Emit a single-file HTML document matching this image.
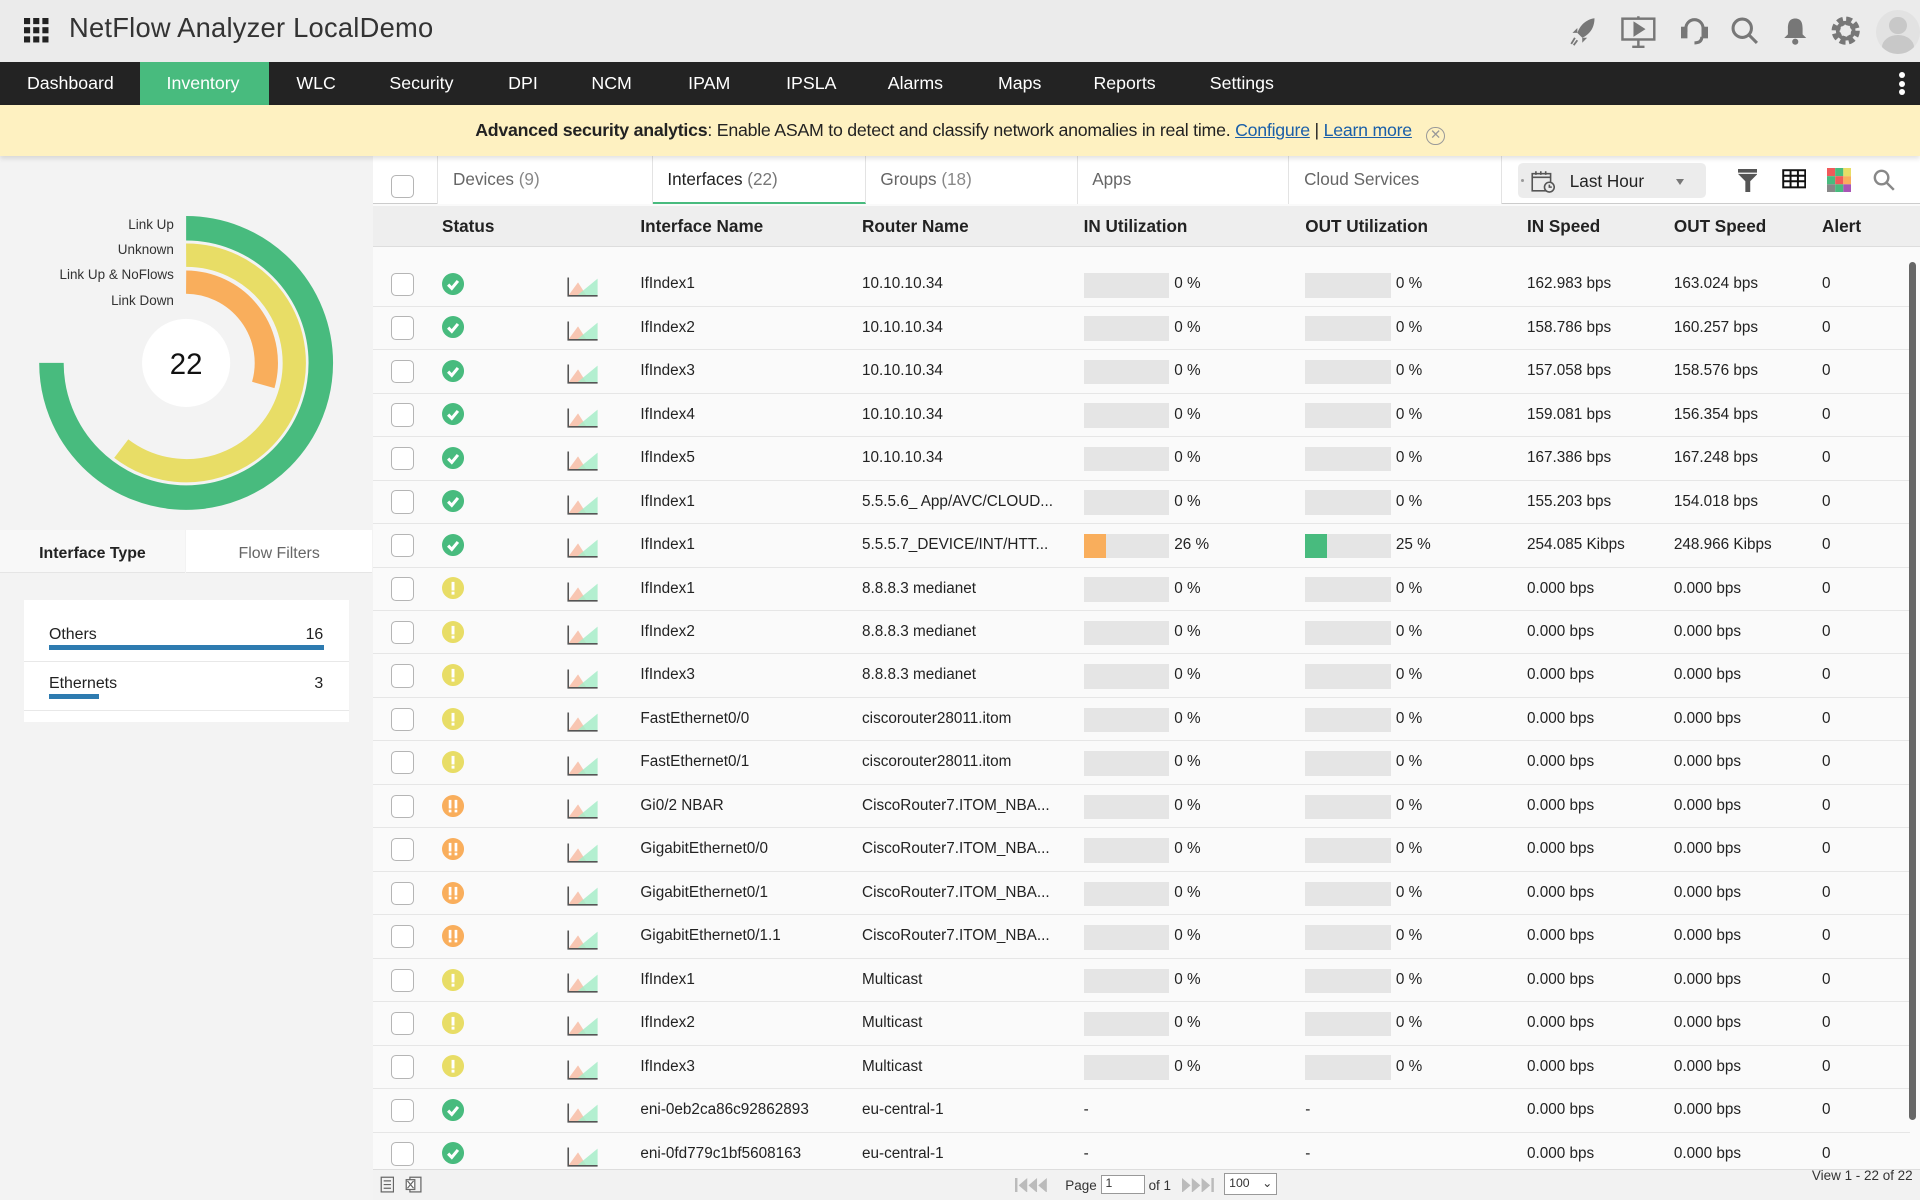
<!DOCTYPE html>
<html><head><meta charset="utf-8"><style>
*{box-sizing:border-box;margin:0;padding:0}
html,body{width:1920px;height:1200px;overflow:hidden;background:#fafafa}
#w{zoom:1.22449;width:1568px;height:980px;position:relative;font-family:"Liberation Sans",sans-serif;color:#222;overflow:hidden}
.a{position:absolute}
#top{left:0;top:0;width:1568px;height:51px;background:#ebebeb}
#nav{left:0;top:51px;width:1568px;height:35px;background:#232323}
#nav span{position:absolute;top:0;line-height:35px;color:#fff;font-size:14.5px}
#ban{left:0;top:86px;width:1568px;height:41px;background:#fef1c1;box-shadow:0 2px 4px rgba(0,0,0,.12);text-align:center;line-height:41px;font-size:14.5px;color:#222;z-index:2;letter-spacing:-.2px}
#ban a{color:#1a5fa8;text-decoration:underline}
#left{left:0;top:127px;width:305px;height:853px;background:#f3f3f3}
.lbl{position:absolute;right:163px;font-size:11px;color:#333}
#main{left:305px;top:127px;width:1263px;height:853px;background:#fafafa}
.tab{position:absolute;top:0;height:40px;line-height:38px;font-size:14px;color:#666;padding-left:12px;border-right:1px solid #e3e3e3;background:#fff}
.cb{position:absolute;width:19px;height:19px;border:1px solid #b5b5b5;border-radius:4px;background:#fff}
.hd{position:absolute;top:49px;font-size:14px;font-weight:bold;color:#222}
.row{position:absolute;left:0;width:1255px;height:35.5px;border-bottom:1px solid #e6e6e6;font-size:12.5px;color:#222}
.row span{position:absolute;top:0;line-height:35px;white-space:nowrap}
.ub{position:absolute;top:8px;width:70px;height:20px;background:#e5e5e5}
</style></head><body><div id="w">
<div id="top" class="a">
 <svg class="a" style="left:20px;top:15px" width="20" height="20" viewBox="0 0 20 20" fill="#222"><rect x="0" y="0" width="5" height="5"/><rect x="7.5" y="0" width="5" height="5"/><rect x="15" y="0" width="5" height="5"/><rect x="0" y="7.5" width="5" height="5"/><rect x="7.5" y="7.5" width="5" height="5"/><rect x="15" y="7.5" width="5" height="5"/><rect x="0" y="15" width="5" height="5"/><rect x="7.5" y="15" width="5" height="5"/><rect x="15" y="15" width="5" height="5"/></svg>
 <div class="a" style="left:56px;top:10px;font-size:23px;color:#333;font-family:'Liberation Sans Narrow','Liberation Sans',sans-serif;letter-spacing:.2px;transform:scaleX(.97);transform-origin:left">NetFlow Analyzer LocalDemo</div>
 <svg class="a" style="left:1282px;top:14px" width="22" height="24" viewBox="0 0 22 24" fill="#777"><path d="M20 1 C13 2 8 7 6 13 L10 17 C16 14 20 9 20 1Z"/><path d="M6 13 L2 13 L6 9Z M10 17 L10 21 L14 17Z"/><path d="M4 17 L1 22 M6 19 L3 23" stroke="#777" stroke-width="1.5"/></svg>
 <svg class="a" style="left:1323px;top:12px" width="30" height="28" viewBox="0 0 30 28" fill="none" stroke="#777" stroke-width="2"><rect x="2" y="3" width="26" height="17"/><path d="M12 7 L19 11.5 L12 16Z" fill="#777"/><path d="M15 20 V26 M10 26 H20 M15 1 V3"/></svg>
 <svg class="a" style="left:1373px;top:13px" width="22" height="26" viewBox="0 0 22 26" fill="none" stroke="#777" stroke-width="2.5"><path d="M4 13 V10 a7 7 0 0 1 14 0 V13"/><rect x="1" y="10" width="3" height="7" fill="#777"/><rect x="18" y="10" width="3" height="7" fill="#777"/><path d="M17 17 C17 21 14 22 11 22"/></svg>
 <svg class="a" style="left:1413px;top:13px" width="24" height="24" viewBox="0 0 24 24" fill="none" stroke="#777" stroke-width="2.5"><circle cx="10" cy="10" r="7.5"/><path d="M15.5 15.5 L22 22"/></svg>
 <svg class="a" style="left:1456px;top:13px" width="20" height="24" viewBox="0 0 20 24" fill="#777"><path d="M10 2 C5 2 4 6 4 10 V15 L1 18 H19 L16 15 V10 C16 6 15 2 10 2Z"/><circle cx="10" cy="21" r="2.5"/></svg>
 <svg class="a" style="left:1495px;top:13px" width="24" height="24" viewBox="0 0 24 24"><circle cx="12" cy="12" r="8" fill="none" stroke="#777" stroke-width="7" stroke-dasharray="4 2.3"/><circle cx="12" cy="12" r="6.5" fill="none" stroke="#777" stroke-width="3"/></svg>
 <div class="a" style="left:1532px;top:8px;width:36px;height:36px;border-radius:50%;background:#e2e2e2;overflow:hidden"><div class="a" style="left:11px;top:6px;width:14px;height:14px;border-radius:50%;background:#c8c8c8"></div><div class="a" style="left:5px;top:21px;width:26px;height:20px;border-radius:50%;background:#c8c8c8"></div></div>
</div>
<div id="nav" class="a">
 <div class="a" style="left:114px;top:0;width:106px;height:35px;background:#48bb7e"></div>
 <span style="left:22px">Dashboard</span><span style="left:136px">Inventory</span><span style="left:242px">WLC</span><span style="left:318px">Security</span><span style="left:415px">DPI</span><span style="left:483px">NCM</span><span style="left:562px">IPAM</span><span style="left:642px">IPSLA</span><span style="left:725px">Alarms</span><span style="left:815px">Maps</span><span style="left:893px">Reports</span><span style="left:988px">Settings</span>
 <div class="a" style="left:1551px;top:8px;width:5px;height:5px;border-radius:50%;background:#fff"></div><div class="a" style="left:1551px;top:15px;width:5px;height:5px;border-radius:50%;background:#fff"></div><div class="a" style="left:1551px;top:22px;width:5px;height:5px;border-radius:50%;background:#fff"></div>
</div>
<div id="ban" class="a"><b>Advanced security analytics</b>: Enable ASAM to detect and classify network anomalies in real time. <a>Configure</a> | <a>Learn more</a> <span style="display:inline-block;width:15px;height:15px;border:1.5px solid #999;border-radius:50%;color:#999;font-size:11px;line-height:12px;vertical-align:-2px;margin-left:8px">✕</span></div>
<div id="left" class="a">
 <svg class="a" style="left:0;top:0" width="305" height="300" viewBox="0 127 305 300">
  <g fill="none">
   <path d="M152 186 A110 110 0 1 1 42 296" stroke="#48bb7e" stroke-width="20"/>
   <path d="M152 208 A88 88 0 1 1 99 366" stroke="#e8dd66" stroke-width="19"/>
   <path d="M152 230 A66 66 0 0 1 215 314" stroke="#f9ae5c" stroke-width="19"/>
  </g>
  <circle cx="152" cy="296" r="36" fill="#fff"/>
  <text x="152" y="305" text-anchor="middle" font-size="24" font-family="Liberation Sans" fill="#111">22</text>
 </svg>
 <div class="lbl" style="top:50px">Link Up</div><div class="lbl" style="top:71px">Unknown</div><div class="lbl" style="top:91px">Link Up &amp; NoFlows</div><div class="lbl" style="top:112px">Link Down</div>
 <div class="a" style="left:0;top:306px;width:151px;height:35px;background:#f8f8f8;font-size:13px;font-weight:bold;text-align:center;line-height:40px;border-bottom:1px solid #e5e5e5">Interface Type</div>
 <div class="a" style="left:152px;top:306px;width:152px;height:35px;background:#fff;font-size:13px;color:#666;text-align:center;line-height:40px;border-bottom:1px solid #e5e5e5">Flow Filters</div>
 <div class="a" style="left:20px;top:363px;width:265px;height:100px;background:#fff">
  <div class="a" style="left:20px;top:21px;font-size:13px">Others</div><div class="a" style="right:21px;top:21px;font-size:13px">16</div>
  <div class="a" style="left:20px;top:37px;width:225px;height:4px;background:#2e7bb0"></div>
  <div class="a" style="left:0;top:50px;width:265px;height:1px;background:#e8e8e8"></div>
  <div class="a" style="left:20px;top:61px;font-size:13px">Ethernets</div><div class="a" style="right:21px;top:61px;font-size:13px">3</div>
  <div class="a" style="left:20px;top:77px;width:41px;height:4px;background:#2e7bb0"></div>
  <div class="a" style="left:0;top:90px;width:265px;height:1px;background:#e8e8e8"></div>
 </div>
</div>
<div id="main" class="a">
 <div class="a" style="left:0;top:0;width:1263px;height:40px;background:#fff;border-bottom:1px solid #ccc"></div>
 <div class="cb" style="left:14px;top:16px"></div>
 <div class="a" style="left:52px;top:0;width:1px;height:40px;background:#e3e3e3"></div>
 <div class="tab" style="left:53px;width:175px">Devices <span style="color:#888">(9)</span></div>
 <div class="tab" style="left:228px;width:174px;color:#222;border-bottom:2px solid #48bb7e">Interfaces <span style="color:#777">(22)</span></div>
 <div class="tab" style="left:402px;width:173px">Groups <span style="color:#888">(18)</span></div>
 <div class="tab" style="left:575px;width:173px">Apps</div>
 <div class="tab" style="left:748px;width:174px">Cloud Services</div>
 <div class="a" style="left:935px;top:6px;width:153px;height:29px;background:#ececec;border-radius:4px">
  <div class="a" style="left:2px;top:13px;width:3px;height:3px;border-radius:50%;background:#999"></div>
  <svg class="a" style="left:10px;top:6px" width="20" height="19" viewBox="0 0 20 19" fill="none" stroke="#555" stroke-width="1.3"><rect x="1" y="3" width="15" height="14"/><path d="M1 6 H16 M4 1 V4 M8 1 V4 M12 1 V4"/><circle cx="15" cy="14" r="4" fill="#ececec"/><path d="M15 12 V14 H17"/></svg>
  <div class="a" style="left:42px;top:1px;line-height:29px;font-size:14px">Last Hour</div>
  <div class="a" style="left:129px;top:13px;border:4px solid transparent;border-top:5px solid #777"></div>
 </div>
 <svg class="a" style="left:1114px;top:11px" width="16" height="19" viewBox="0 0 16 19" fill="#555"><path d="M0 0 H16 V3 H0Z M0 4 H16 L10 10 V19 H6 V10Z"/></svg>
 <svg class="a" style="left:1150px;top:11px" width="20" height="16" viewBox="0 0 20 16" fill="none" stroke="#111" stroke-width="1.6"><rect x="1" y="1" width="18" height="14"/><path d="M1 5.5 H19 M1 10 H19 M7 1 V15 M13 1 V15"/></svg>
 <svg class="a" style="left:1187px;top:10px" width="20" height="20" viewBox="0 0 21 21"><rect x="0" y="0" width="7" height="7" fill="#f05a5a"/><rect x="7" y="0" width="7" height="7" fill="#48bb7e"/><rect x="14" y="0" width="7" height="7" fill="#e8dd66"/><rect x="0" y="7" width="7" height="7" fill="#48bb7e"/><rect x="7" y="7" width="7" height="7" fill="#f05a5a"/><rect x="14" y="7" width="7" height="7" fill="#f9ae5c"/><rect x="0" y="14" width="7" height="7" fill="#888"/><rect x="7" y="14" width="7" height="7" fill="#48bb7e"/><rect x="14" y="14" width="7" height="7" fill="#a855b5"/></svg>
 <svg class="a" style="left:1225px;top:11px" width="18" height="18" viewBox="0 0 18 18" fill="none" stroke="#888" stroke-width="2"><circle cx="7" cy="7" r="5.5"/><path d="M11 11 L17 17"/></svg>
 <div class="a" style="left:0;top:41px;width:1263px;height:34px;background:#eeeeee;border-bottom:1px solid #ddd"></div>
 <div class="hd" style="left:56px">Status</div><div class="hd" style="left:218px">Interface Name</div><div class="hd" style="left:399px">Router Name</div><div class="hd" style="left:580px">IN Utilization</div><div class="hd" style="left:761px">OUT Utilization</div><div class="hd" style="left:942px">IN Speed</div><div class="hd" style="left:1062px">OUT Speed</div><div class="hd" style="left:1183px">Alert</div>
 <div id="rows" class="a" style="left:0;top:89px;width:1255px;height:739px;overflow:hidden"></div>
 <div class="a" style="left:1254px;top:87px;width:6px;height:701px;background:#666;border-radius:3px"></div>
 <div class="a" style="left:0;top:828px;width:1263px;height:25px;background:#f2f2f2;border-top:1px solid #ddd;font-size:11px;color:#333">
  <svg class="a" style="left:5px;top:5px" width="12" height="14" viewBox="0 0 12 14" fill="none" stroke="#666"><rect x="1" y="1" width="10" height="12"/><path d="M3 4 H9 M3 7 H9 M3 10 H9"/></svg>
  <svg class="a" style="left:26px;top:5px" width="14" height="14" viewBox="0 0 14 14" fill="none" stroke="#666"><rect x="4" y="1" width="9" height="12"/><rect x="1" y="3" width="7" height="8" fill="#fff"/><path d="M2 4 L7 10 M7 4 L2 10"/></svg>
  <svg class="a" style="left:524px;top:6px" width="32" height="12" viewBox="0 0 32 12" fill="#bbb"><rect x="0" y="0" width="2" height="12"/><path d="M10 0 L3 6 L10 12Z M18 0 L11 6 L18 12Z M26 0 L19 6 L26 12Z"/></svg>
  <span class="a" style="left:565px;top:6px">Page</span><div class="a" style="left:594px;top:4px;width:36px;height:15px;border:1px solid #999;background:#fff;font-size:10px;padding-left:3px">1</div><span class="a" style="left:633px;top:6px">of 1</span>
  <svg class="a" style="left:660px;top:6px" width="32" height="12" viewBox="0 0 32 12" fill="#bbb"><path d="M0 0 L7 6 L0 12Z M8 0 L15 6 L8 12Z M16 0 L23 6 L16 12Z"/><rect x="24" y="0" width="2" height="12"/></svg>
  <div class="a" style="left:695px;top:2px;width:43px;height:18px;border:1px solid #999;background:#fff;font-size:10px;padding:2px 3px">100 <span style="float:right">⌄</span></div>
  <span class="a" style="right:6px;top:-2px">View 1 - 22 of 22</span>
 </div>
</div>
</div>
<script>
var G='<svg width="18" height="18" viewBox="0 0 18 18"><circle cx="9" cy="9" r="9" fill="#48bb7e"/><path d="M5 9.5 L8 12.5 L13 6.5" fill="none" stroke="#fff" stroke-width="2.5"/></svg>';
var Y='<svg width="18" height="18" viewBox="0 0 18 18"><circle cx="9" cy="9" r="9" fill="#e8dd66"/><rect x="7.8" y="4" width="2.4" height="7" fill="#fff"/><rect x="7.8" y="12" width="2.4" height="2.4" fill="#fff"/></svg>';
var O='<svg width="18" height="18" viewBox="0 0 18 18"><circle cx="9" cy="9" r="9" fill="#f9ae5c"/><rect x="5.5" y="4" width="2.2" height="7" fill="#fff"/><rect x="5.5" y="12" width="2.2" height="2.2" fill="#fff"/><rect x="10.3" y="4" width="2.2" height="7" fill="#fff"/><rect x="10.3" y="12" width="2.2" height="2.2" fill="#fff"/></svg>';
var C='<svg width="26" height="18" viewBox="0 0 26 18"><path d="M1 17 L9 6 L16 17Z" fill="#f7b9a0" opacity=".8"/><path d="M8 17 L25 3 L25 17Z" fill="#a6ecc8" opacity=".85"/><path d="M1 2 V17 H25" fill="none" stroke="#555" stroke-width="1.3"/></svg>';
var R=[[G,'IfIndex1','10.10.10.34'],[G,'IfIndex2','10.10.10.34'],[G,'IfIndex3','10.10.10.34'],[G,'IfIndex4','10.10.10.34'],[G,'IfIndex5','10.10.10.34'],[G,'IfIndex1','5.5.5.6_ App/AVC/CLOUD...'],[G,'IfIndex1','5.5.5.7_DEVICE/INT/HTT...',1],[Y,'IfIndex1','8.8.8.3 medianet'],[Y,'IfIndex2','8.8.8.3 medianet'],[Y,'IfIndex3','8.8.8.3 medianet'],[Y,'FastEthernet0/0','ciscorouter28011.itom'],[Y,'FastEthernet0/1','ciscorouter28011.itom'],[O,'Gi0/2 NBAR','CiscoRouter7.ITOM_NBA...'],[O,'GigabitEthernet0/0','CiscoRouter7.ITOM_NBA...'],[O,'GigabitEthernet0/1','CiscoRouter7.ITOM_NBA...'],[O,'GigabitEthernet0/1.1','CiscoRouter7.ITOM_NBA...'],[Y,'IfIndex1','Multicast'],[Y,'IfIndex2','Multicast'],[Y,'IfIndex3','Multicast'],[G,'eni-0eb2ca86c92862893','eu-central-1',2],[G,'eni-0fd779c1bf5608163','eu-central-1',2]];
var sp=[['162.983 bps','163.024 bps'],['158.786 bps','160.257 bps'],['157.058 bps','158.576 bps'],['159.081 bps','156.354 bps'],['167.386 bps','167.248 bps'],['155.203 bps','154.018 bps'],['254.085 Kibps','248.966 Kibps']];
var h='';
R.forEach(function(r,i){
 var top=i*35.5;
 var s=sp[i]||['0.000 bps','0.000 bps'];
 var u1,u2;
 if(r[3]==2){u1='<span style="left:580px">-</span>';u2='<span style="left:761px">-</span>';}
 else if(r[3]==1){u1='<div class="ub" style="left:580px"><div style="width:18px;height:20px;background:#f9ae5c"></div></div><span style="left:654px">26 %</span>';u2='<div class="ub" style="left:761px"><div style="width:18px;height:20px;background:#48bb7e"></div></div><span style="left:835px">25 %</span>';}
 else{u1='<div class="ub" style="left:580px"></div><span style="left:654px">0 %</span>';u2='<div class="ub" style="left:761px"></div><span style="left:835px">0 %</span>';}
 h+='<div class="row" style="top:'+(top-1)+'px"><div class="cb" style="left:14px;top:8px"></div><div class="a" style="left:56px;top:8px">'+r[0]+'</div><div class="a" style="left:158px;top:10px">'+C+'</div><span style="left:218px">'+r[1]+'</span><span style="left:399px">'+r[2]+'</span>'+u1+u2+'<span style="left:942px">'+s[0]+'</span><span style="left:1062px">'+s[1]+'</span><span style="left:1183px">0</span></div>';
});
document.getElementById('rows').innerHTML=h;
</script>
</body></html>
